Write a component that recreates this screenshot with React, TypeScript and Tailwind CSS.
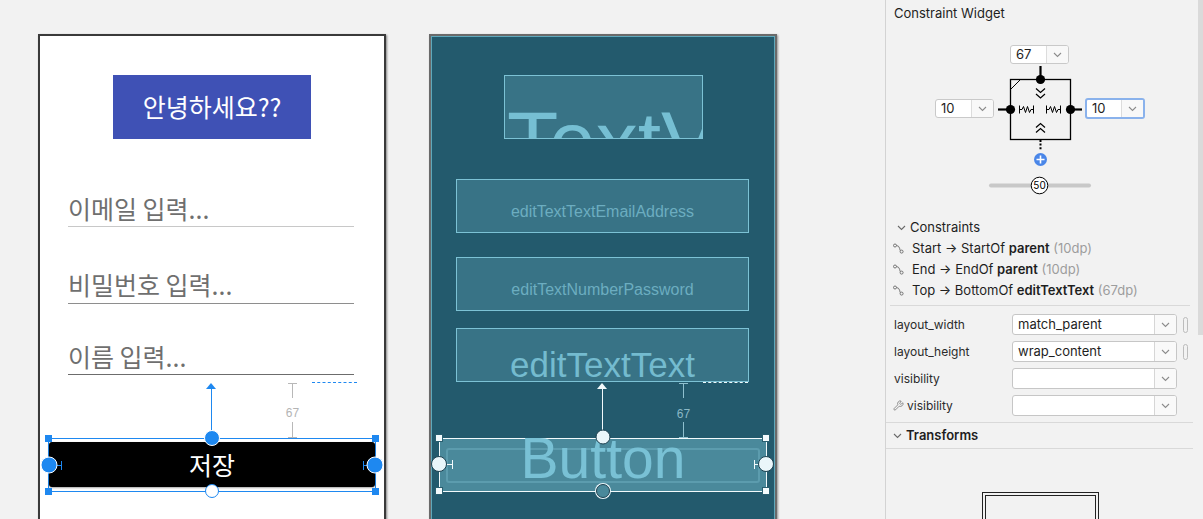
import React from "react";
import { Wrench } from "lucide-react";

const Chevron = ({ className = "" }: { className?: string }) => (
  <svg width="9" height="6" viewBox="0 0 9 6" className={className}>
    <path d="M1 1 L4.5 4.5 L8 1" fill="none" stroke="currentColor" strokeWidth="1.1" />
  </svg>
);

function Field({ text, wrap, line }: { text: string; wrap: string; line: string }) {
  return (
    <div className={wrap}>
      <div className="h-[30px] whitespace-nowrap text-[25px] leading-[30px] text-[#6f6f6f]">{text}</div>
      <div className={line} />
    </div>
  );
}

function DesignPhone() {
  return (
    <div className="ml-[38px] mt-[34px] h-[500px] w-[348px] shrink-0 border-2 border-[#3a3a3a] bg-white font-['Noto_Sans_CJK_KR','Noto_Sans',sans-serif] shadow-[1px_1px_2px_rgba(0,0,0,0.45)]">
      <div className="flex flex-col">
        <div className="mx-auto mt-[39px] flex h-[64px] w-[198px] items-center justify-center bg-[#3f51b5] text-[25px] text-white">
          안녕하세요??
        </div>
        <Field text="이메일 입력..." wrap="ml-[28px] mt-[54px] w-[286px]" line="mt-[3px] h-px bg-[#c8c8c8]" />
        <Field text="비밀번호 입력..." wrap="ml-[28px] mt-[42px] w-[286px]" line="mt-[4px] h-px bg-[#8e8e8e]" />
        <Field text="이름 입력..." wrap="ml-[28px] mt-[37px] w-[286px]" line="mt-[3px] h-px bg-[#6c6c6c]" />
        {/* constraint decorations */}
        <div className="relative h-[63px] font-['Liberation_Sans',sans-serif]">
          <div className="absolute left-[166px] top-[8px] h-0 w-0 border-x-[5px] border-b-[6px] border-x-transparent border-b-[#1e88f0]" />
          <div className="absolute left-[171px] top-[13px] h-[50px] w-px bg-[#1e88f0]" />
          <div className="absolute left-[248px] top-[8px] h-px w-[9px] bg-[#b8b8b8]" />
          <div className="absolute left-[252px] top-[8px] h-[15px] w-px bg-[#b8b8b8]" />
          <div className="absolute left-[244px] top-[31px] w-[17px] text-center text-[12px] leading-[14px] text-[#b4b4b4]">67</div>
          <div className="absolute left-[252px] top-[47px] h-[16px] w-px bg-[#b8b8b8]" />
          <div className="absolute left-[248px] top-[62px] h-px w-[9px] bg-[#b8b8b8]" />
          <div className="absolute left-[272px] top-[7px] w-[45px] border-t border-dashed border-[#1e88f0]" />
        </div>
        {/* selected button */}
        <div className="relative ml-[8px] h-[54px] w-[328px] border border-[#1e88f0]">
          <div className="mt-[3px] flex h-[45px] w-full items-center justify-center rounded-[3px] bg-black text-[25px] text-white shadow-[0_1px_2px_rgba(0,0,0,0.35)]">
            저장
          </div>
          <div className="absolute left-[7px] top-[26px] h-px w-[5px] bg-[#1e88f0]" />
          <div className="absolute left-[12px] top-[22px] h-[9px] w-px bg-[#1e88f0]" />
          <div className="absolute left-[314px] top-[22px] h-[9px] w-px bg-[#1e88f0]" />
          <div className="absolute left-[314px] top-[26px] h-px w-[5px] bg-[#1e88f0]" />
          <div className="absolute left-[-4px] top-[-4px] h-[7px] w-[7px] bg-[#1e88f0]" />
          <div className="absolute left-[323px] top-[-4px] h-[7px] w-[7px] bg-[#1e88f0]" />
          <div className="absolute left-[-4px] top-[49px] h-[7px] w-[7px] bg-[#1e88f0]" />
          <div className="absolute left-[323px] top-[49px] h-[7px] w-[7px] bg-[#1e88f0]" />
          <div className="absolute left-[163px] top-[-1px] h-[16px] w-[16px] -translate-x-1/2 -translate-y-1/2 rounded-full border-[1.5px] border-white bg-[#1e88f0]" />
          <div className="absolute left-[0px] top-[26px] h-[17px] w-[17px] -translate-x-1/2 -translate-y-1/2 rounded-full border-[1.5px] border-white bg-[#1e88f0]" />
          <div className="absolute left-[326px] top-[26px] h-[17px] w-[17px] -translate-x-1/2 -translate-y-1/2 rounded-full border-[1.5px] border-white bg-[#1e88f0]" />
          <div className="absolute left-[163px] top-[52px] h-[14px] w-[14px] -translate-x-1/2 -translate-y-1/2 rounded-full border-[1.5px] border-[#1e88f0] bg-white" />
        </div>
      </div>
    </div>
  );
}

function BlueprintPhone() {
  return (
    <div className="ml-[43px] mt-[34px] h-[500px] w-[348px] shrink-0 border-2 border-[#6a6a6a] bg-[#235a6d] font-['Liberation_Sans',sans-serif] shadow-[1px_1px_2px_rgba(0,0,0,0.4)]">
      <div className="flex h-full flex-col border border-[#5fa8bb]">
        <div className="relative ml-[72px] mt-[38px] h-[64px] w-[199px] overflow-hidden border border-[#7cc2d5] bg-[#387386]">
          <div className="absolute left-[2px] top-[23px] whitespace-nowrap text-[84px] leading-none text-[#76bfd3]">TextView</div>
        </div>
        <div className="ml-[24px] mt-[40px] h-[54px] w-[293px] border border-[#7cc2d5] bg-[#387386] pt-[24px] text-center text-[16px] leading-4 text-[#6cadc0]">
          editTextTextEmailAddress
        </div>
        <div className="ml-[24px] mt-[24px] h-[54px] w-[293px] border border-[#7cc2d5] bg-[#387386] pt-[24px] text-center text-[16px] leading-4 text-[#6cadc0]">
          editTextNumberPassword
        </div>
        <div className="ml-[24px] mt-[17px] flex h-[54px] w-[293px] items-end justify-center border border-[#7cc2d5] bg-[#387386] text-[35px] leading-none text-[#74bbcf]">
          <span className="mb-[-1px]">editTextText</span>
        </div>
        <div className="relative h-[56px]">
          <div className="absolute left-[165px] top-[1px] h-0 w-0 border-x-[5px] border-b-[6px] border-x-transparent border-b-[#f2fafc]" />
          <div className="absolute left-[170px] top-[6px] h-[50px] w-px bg-[#f2fafc]" />
          <div className="absolute left-[247px] top-[1px] h-px w-[9px] bg-[#8fc0cf]" />
          <div className="absolute left-[251px] top-[1px] h-[15px] w-px bg-[#8fc0cf]" />
          <div className="absolute left-[243px] top-[25px] w-[17px] text-center text-[12px] leading-[14px] text-[#8ab8c6]">67</div>
          <div className="absolute left-[251px] top-[40px] h-[16px] w-px bg-[#8fc0cf]" />
          <div className="absolute left-[247px] top-[55px] h-px w-[9px] bg-[#8fc0cf]" />
          <div className="absolute left-[271px] top-[0px] w-[45px] border-t border-dashed border-[#eef8fb]" />
        </div>
        <div className="relative ml-[7px] h-[54px] w-[328px] border border-[#f2fafc] bg-[#4a899b]">
          <div className="absolute left-[6px] top-[9px] h-[35px] w-[314px] rounded-[3px] border-2 border-[#5c9cae]" />
          <div className="absolute inset-x-0 top-[-9px] text-center text-[57px] leading-none text-[#79c1d5]">Button</div>
          <div className="absolute left-[7px] top-[25px] h-px w-[5px] bg-[#f2fafc]" />
          <div className="absolute left-[12px] top-[21px] h-[9px] w-px bg-[#f2fafc]" />
          <div className="absolute left-[314px] top-[21px] h-[9px] w-px bg-[#f2fafc]" />
          <div className="absolute left-[314px] top-[25px] h-px w-[5px] bg-[#f2fafc]" />
          <div className="absolute left-[-5px] top-[-5px] h-[8px] w-[8px] border border-[#2a5f70] bg-[#f4fbfd]" />
          <div className="absolute left-[322px] top-[-5px] h-[8px] w-[8px] border border-[#2a5f70] bg-[#f4fbfd]" />
          <div className="absolute left-[-5px] top-[48px] h-[8px] w-[8px] border border-[#2a5f70] bg-[#f4fbfd]" />
          <div className="absolute left-[322px] top-[48px] h-[8px] w-[8px] border border-[#2a5f70] bg-[#f4fbfd]" />
          <div className="absolute left-[163px] top-[-2px] h-[15px] w-[15px] -translate-x-1/2 -translate-y-1/2 rounded-full border border-[#1d4150] bg-[#eaf6fa]" />
          <div className="absolute left-[-1px] top-[25px] h-[16px] w-[16px] -translate-x-1/2 -translate-y-1/2 rounded-full border border-[#1d4150] bg-[#eaf6fa]" />
          <div className="absolute left-[326px] top-[25px] h-[16px] w-[16px] -translate-x-1/2 -translate-y-1/2 rounded-full border border-[#1d4150] bg-[#eaf6fa]" />
          <div className="absolute left-[163px] top-[52px] h-[14px] w-[14px] -translate-x-1/2 -translate-y-1/2 rounded-full border-[1.5px] border-[#1d4150] bg-[#4a899b] ring-1 ring-[#eaf6fa]" />
        </div>
      </div>
    </div>
  );
}

function MiniSelect({ value, cls, focused }: { value: string; cls: string; focused?: boolean }) {
  return (
    <div
      className={
        focused
          ? `absolute flex overflow-hidden rounded-[3px] border-2 border-[#8ab2ec] bg-white ${cls}`
          : `absolute flex overflow-hidden rounded-[3px] border border-[#c9c9c9] bg-white ${cls}`
      }
    >
      <div className="flex flex-1 items-center pl-[5px] text-[13px] text-[#1e1e1e]">{value}</div>
      <div className="flex w-[22px] items-center justify-center border-l border-[#dcdcdc] bg-[#f8f8f8] text-[#8c8c8c]">
        <Chevron />
      </div>
    </div>
  );
}

function ConstraintWidget() {
  return (
    <div className="relative ml-[44px] mt-[19px] h-[160px] w-[220px]">
      <MiniSelect value="67" cls="left-[80px] top-[5px] h-[19px] w-[59px]" />
      <MiniSelect value="10" cls="left-[5px] top-[59px] h-[19px] w-[59px]" />
      <MiniSelect value="10" focused cls="left-[155px] top-[58px] h-[21px] w-[60px]" />
      <svg className="absolute left-0 top-0" width="220" height="160" viewBox="0 0 220 160">
        <rect x="80.5" y="39.5" width="60" height="60" fill="none" stroke="#000" strokeWidth="1.3" />
        <line x1="81" y1="49" x2="90" y2="40" stroke="#000" strokeWidth="1" />
        <line x1="110.5" y1="26" x2="110.5" y2="39" stroke="#000" strokeWidth="2.2" />
        <circle cx="110.5" cy="39.5" r="4.6" fill="#000" />
        <line x1="68" y1="69.5" x2="80" y2="69.5" stroke="#000" strokeWidth="2.2" />
        <circle cx="80.5" cy="69.5" r="4.6" fill="#000" />
        <line x1="141" y1="69.5" x2="152" y2="69.5" stroke="#000" strokeWidth="2.2" />
        <circle cx="140.5" cy="69.5" r="4.6" fill="#000" />
        <g fill="none" stroke="#000" strokeWidth="1">
          <path d="M89.5 65.5 V73.5 M103.5 65.5 V73.5 M89.5 69.5 H92 L93.5 66.5 L95.5 72.5 L97.5 66.5 L99.5 72.5 L101 69.5 H103.5" />
          <path d="M116.5 65.5 V73.5 M130.5 65.5 V73.5 M116.5 69.5 H119 L120.5 66.5 L122.5 72.5 L124.5 66.5 L126.5 72.5 L128 69.5 H130.5" />
          <path d="M106 48.5 L110.5 52.5 L115 48.5 M106 54 L110.5 58 L115 54" strokeWidth="1.2" />
          <path d="M106 87.5 L110.5 83.5 L115 87.5 M106 92.5 L110.5 88.5 L115 92.5" strokeWidth="1.2" />
        </g>
        <line x1="110.5" y1="100" x2="110.5" y2="110" stroke="#000" strokeWidth="2" strokeDasharray="2 1.6" />
        <circle cx="110.5" cy="119.5" r="6.5" fill="#4a86e8" />
        <path d="M106.5 119.5 H114.5 M110.5 115.5 V123.5" stroke="#fff" strokeWidth="1.6" />
        <rect x="59" y="143.5" width="102" height="4" rx="2" fill="#c8c8c8" />
        <circle cx="109.5" cy="145.5" r="8.3" fill="#fff" stroke="#000" strokeWidth="1" />
        <text x="109.5" y="149" textAnchor="middle" fontSize="10" fontFamily="Inter, sans-serif" fill="#000">50</text>
      </svg>
    </div>
  );
}

const LinkIcon = () => (
  <svg width="11" height="11" viewBox="0 0 11 11" className="shrink-0">
    <circle cx="2" cy="2.5" r="1.5" fill="none" stroke="#6a6a6a" strokeWidth="0.9" />
    <path d="M3.5 2.5 Q5.8 2.6 6.6 5.2 L7.2 7.6" fill="none" stroke="#6a6a6a" strokeWidth="0.9" />
    <circle cx="8.6" cy="8.6" r="1.5" fill="none" stroke="#6a6a6a" strokeWidth="0.9" />
  </svg>
);

function CRow({ a, b, c }: { a: string; b: string; c: string }) {
  return (
    <div className="flex h-[21px] items-center pl-[7px] text-[13px] text-[#1e1e1e]">
      <LinkIcon />
      <span className="ml-[8px] whitespace-nowrap">
        {a} <span className="font-semibold">{b}</span> <span className="text-[#9d9d9d]">{c}</span>
      </span>
    </div>
  );
}

function Select({ value }: { value: string }) {
  return (
    <div className="flex h-[21px] w-[165px] overflow-hidden rounded-[3px] border border-[#c6c6c6] bg-white">
      <div className="flex flex-1 items-center pl-[5px] text-[13px] text-[#1e1e1e]">{value}</div>
      <div className="flex w-[22px] items-center justify-center border-l border-[#d6d6d6] bg-[#f9f9f9] text-[#8c8c8c]">
        <Chevron />
      </div>
    </div>
  );
}

function AttrRow({ label, value, pill, wrench }: { label: string; value: string; pill?: boolean; wrench?: boolean }) {
  return (
    <div className="flex h-[27px] items-center pl-[8px]">
      <div className="flex w-[118px] items-center text-[12px] text-[#2b2b2b]">
        {wrench && <Wrench size={11} strokeWidth={1.4} className="ml-[-1px] mr-[3px] text-[#5a5a5a]" />}
        {label}
      </div>
      <Select value={value} />
      {pill && <div className="ml-[6px] h-[16px] w-[5px] rounded-full border border-[#bcbcbc]" />}
    </div>
  );
}

function Panel() {
  return (
    <div className="relative flex-1 border-l border-[#d3d3d3] bg-[#f2f2f2] font-['Inter',sans-serif]">
      <div className="absolute right-0 top-0 h-[335px] w-[5px] bg-[#dadada]" />
      <div className="flex flex-col">
        <div className="pl-[8px] pt-[5px] text-[13px] leading-[16px] text-[#1e1e1e]">Constraint Widget</div>
        <ConstraintWidget />
        <div className="mt-[18px] flex h-[20px] items-center pl-[11px] text-[13px] text-[#1e1e1e]">
          <Chevron className="text-[#6a6a6a]" />
          <span className="ml-[4px]">Constraints</span>
        </div>
        <CRow a="Start → StartOf" b="parent" c="(10dp)" />
        <CRow a="End → EndOf" b="parent" c="(10dp)" />
        <CRow a="Top → BottomOf" b="editTextText" c="(67dp)" />
        <div className="ml-[4px] mt-[4px] h-px w-[300px] bg-[#d9d9d9]" />
        <div className="mt-[5px]">
          <AttrRow label="layout_width" value="match_parent" pill />
          <AttrRow label="layout_height" value="wrap_content" pill />
          <AttrRow label="visibility" value="" />
          <AttrRow label="visibility" value="" wrench />
        </div>
        <div className="mt-[3px] h-px w-[307px] bg-[#d9d9d9]" />
        <div className="flex h-[25px] items-center pl-[7px] text-[13px] font-semibold text-[#1e1e1e]">
          <Chevron className="text-[#6a6a6a]" />
          <span className="ml-[4px]">Transforms</span>
        </div>
        <div className="h-px w-[307px] bg-[#d9d9d9]" />
        <div className="ml-[96px] mt-[43px] h-[40px] w-[117px] border-[4px] border-double border-[#222]" />
      </div>
    </div>
  );
}

export default function App() {
  return (
    <div className="flex h-[519px] w-[1203px] overflow-hidden bg-[#f2f2f2]">
      <div className="flex w-[885px] shrink-0 items-start">
        <DesignPhone />
        <BlueprintPhone />
      </div>
      <Panel />
    </div>
  );
}
